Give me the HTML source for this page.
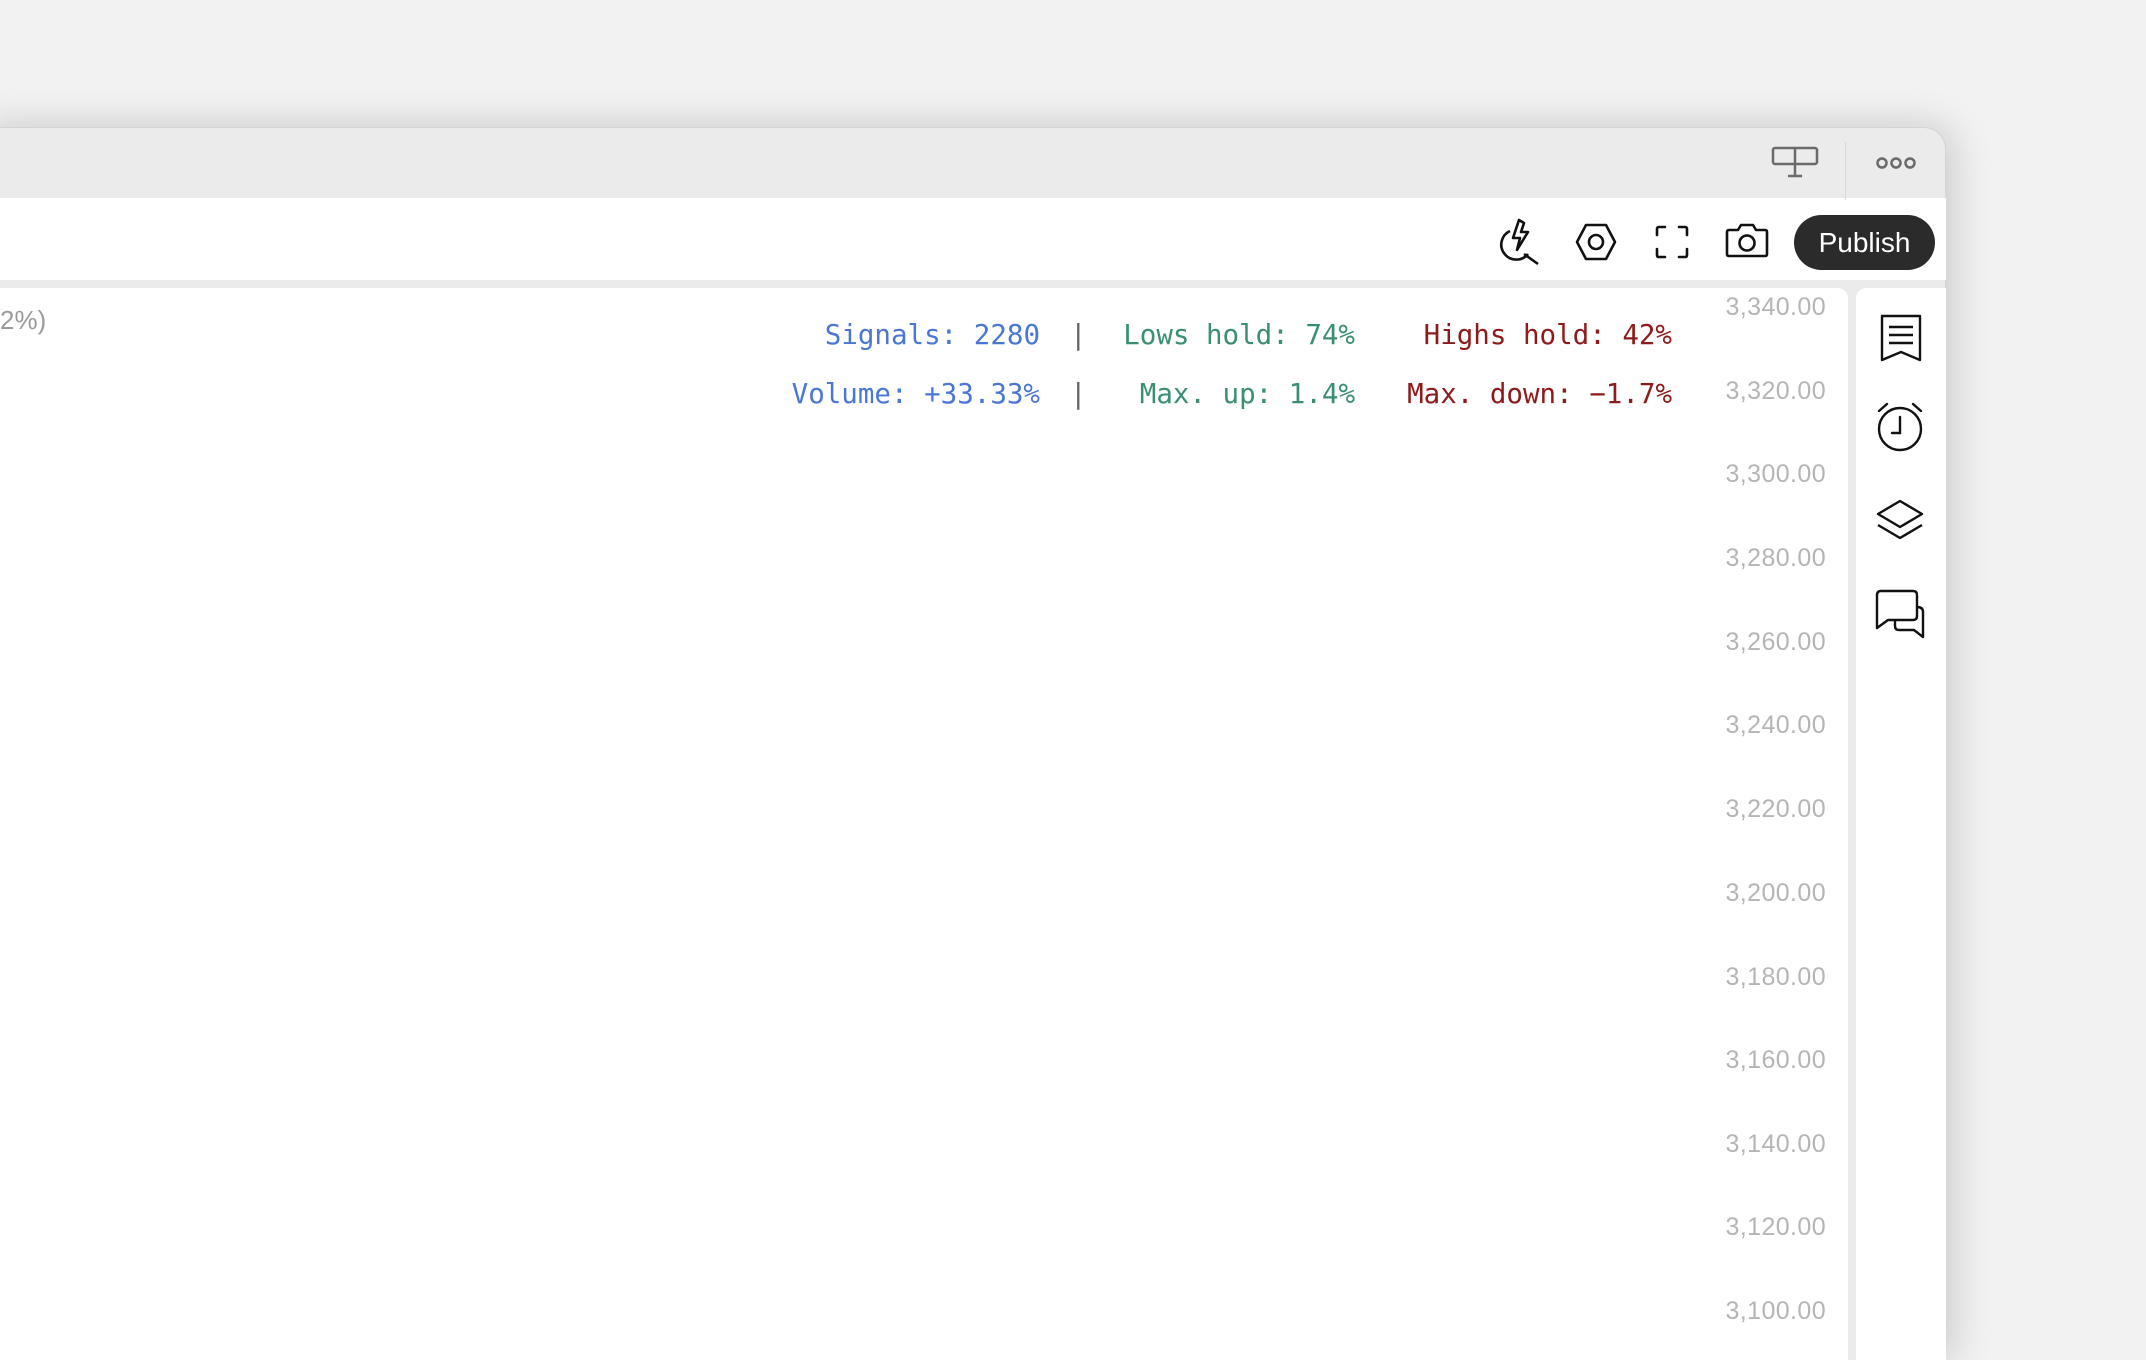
<!DOCTYPE html>
<html><head><meta charset="utf-8"><style>
*{margin:0;padding:0;box-sizing:border-box}
html,body{width:2146px;height:1360px;overflow:hidden;background:#f2f2f2;font-family:"Liberation Sans",sans-serif;position:relative}
.win{position:absolute;left:-20px;top:127px;width:1966px;height:1233px;background:#ebebeb;border-radius:0 22px 0 0;border:1px solid #d4d4d4;border-bottom:none;box-shadow:6px 0 40px rgba(0,0,0,0.18)}
.tool{position:absolute;left:0;top:198px;width:1946px;height:82px;background:#fff}
.chart{position:absolute;left:0;top:288px;width:1848px;height:1072px;background:#fff;border-radius:0 10px 0 0}
.side{position:absolute;left:1856px;top:288px;width:90px;height:1072px;background:#fff;border-radius:10px 0 0 0}
.pub{position:absolute;left:1794px;top:215px;width:141px;height:55px;background:#2b2b2b;border-radius:28px;color:#fff;font-size:28px;line-height:55px;text-align:center}
.mono{position:absolute;font-family:"DejaVu Sans Mono","Liberation Mono",monospace;font-size:27.5px;white-space:pre}
.p{position:absolute;left:1626px;font-size:25px;letter-spacing:0.4px;color:#b5b5b5;width:200px;text-align:right}
svg{position:absolute;overflow:visible}
</style></head><body>
<div class="win"></div>
<div class="tool"></div>
<div class="chart"></div>
<div class="side"></div>
<div style="position:absolute;left:1845px;top:142px;width:1px;height:58px;background:#d8d8d8"></div>
<svg style="left:1773px;top:148px" width="44" height="30" fill="none" stroke="#6a6a6a" stroke-width="2.5"><rect x="0" y="0" width="44" height="16" rx="2"/><path d="M22 0V28M15 28H29"/></svg>
<svg style="left:1876px;top:156px" width="42" height="14" fill="none" stroke="#6a6a6a" stroke-width="2.5"><circle cx="6" cy="7" r="4.5"/><circle cx="20" cy="7" r="4.5"/><circle cx="34" cy="7" r="4.5"/></svg>
<svg style="left:1502px;top:220px" width="40" height="44" fill="none" stroke="#111" stroke-width="2.6" stroke-linejoin="round"><path d="M8 11A15 15 0 1 0 26 34"/><path d="M22 34L36 44"/><path d="M17 0L11 18H18L15 30L26 12H19L22 3Z"/></svg>
<svg style="left:1576px;top:224px" width="40" height="36" fill="none" stroke="#111" stroke-width="2.6" stroke-linejoin="round"><path d="M10 1H30L39 18L30 35H10L1 18Z"/><circle cx="20" cy="18" r="7"/></svg>
<svg style="left:1656px;top:226px" width="32" height="32" fill="none" stroke="#111" stroke-width="2.6" stroke-linecap="round"><path d="M1 9V3Q1 1 3 1H9M23 1H29Q31 1 31 3V9M31 23V29Q31 31 29 31H23M9 31H3Q1 31 1 29V23"/></svg>
<svg style="left:1726px;top:224px" width="42" height="33" fill="none" stroke="#111" stroke-width="2.6" stroke-linejoin="round"><path d="M3 6H12L15 1H27L30 6H39Q41 6 41 8V30Q41 32 39 32H3Q1 32 1 30V8Q1 6 3 6Z"/><circle cx="21" cy="19" r="7.5"/></svg>
<div class="pub">Publish</div>
<div style="position:absolute;left:0;top:305px;font-size:26px;color:#9a9a9a">2%)</div>
<div class="mono" style="right:1106px;top:319px;color:#4a76d4">Signals: 2280</div>
<div class="mono" style="left:1070px;top:319px;color:#666">|</div>
<div class="mono" style="right:791px;top:319px;color:#3a8f72">Lows hold: 74%</div>
<div class="mono" style="right:474px;top:319px;color:#8e1b1b">Highs hold: 42%</div>
<div class="mono" style="right:1106px;top:378px;color:#4a76d4">Volume: +33.33%</div>
<div class="mono" style="left:1070px;top:378px;color:#666">|</div>
<div class="mono" style="right:791px;top:378px;color:#3a8f72">Max. up: 1.4%</div>
<div class="mono" style="right:474px;top:378px;color:#8e1b1b">Max. down: −1.7%</div>
<div class="p" style="top:293px">3,340.00</div>
<div class="p" style="top:377px">3,320.00</div>
<div class="p" style="top:460px">3,300.00</div>
<div class="p" style="top:544px">3,280.00</div>
<div class="p" style="top:628px">3,260.00</div>
<div class="p" style="top:711px">3,240.00</div>
<div class="p" style="top:795px">3,220.00</div>
<div class="p" style="top:879px">3,200.00</div>
<div class="p" style="top:963px">3,180.00</div>
<div class="p" style="top:1046px">3,160.00</div>
<div class="p" style="top:1130px">3,140.00</div>
<div class="p" style="top:1213px">3,120.00</div>
<div class="p" style="top:1297px">3,100.00</div>
<svg style="left:1881px;top:315px" width="40" height="46" fill="none" stroke="#111" stroke-width="2.4" stroke-linejoin="round"><path d="M1 1H39V45L20 37L1 45Z"/><path d="M8 12H32M8 20H32M8 28H32"/></svg>
<svg style="left:1876px;top:402px" width="48" height="50" fill="none" stroke="#111" stroke-width="2.4" stroke-linecap="round"><circle cx="24" cy="27" r="21"/><path d="M24 15V31H16M3 9L11 2M45 9L37 2"/></svg>
<svg style="left:1877px;top:500px" width="46" height="40" fill="none" stroke="#111" stroke-width="2.4" stroke-linejoin="round"><path d="M23 1L45 14L23 27L1 14Z"/><path d="M1 25L23 38L45 25"/></svg>
<svg style="left:1876px;top:590px" width="48" height="48" fill="none" stroke="#111" stroke-width="2.4" stroke-linejoin="round"><path d="M5 1H37Q41 1 41 5V26Q41 30 37 30H12L1 38V5Q1 1 5 1Z"/><path d="M41 17Q47 17 47 22V47L38 40H23Q19 40 19 36V30"/></svg>
</body></html>
